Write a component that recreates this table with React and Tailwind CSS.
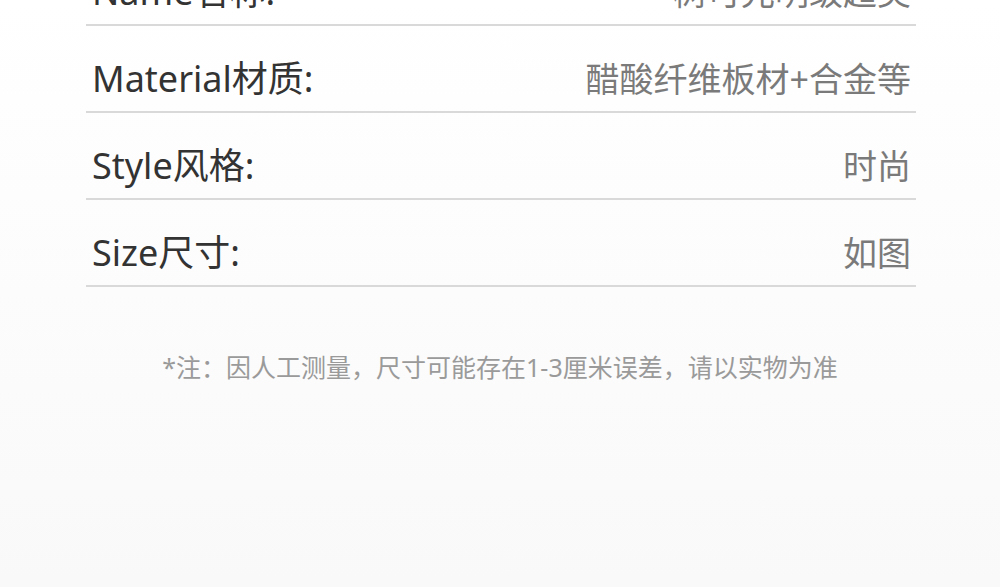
import React from 'react';

const rows = [
    { label: 'Name名称:', value: '树可光明级超美' },
    { label: 'Material材质:', value: '醋酸纤维板材+合金等' },
    { label: 'Style风格:', value: '时尚' },
    { label: 'Size尺寸:', value: '如图' },
];

export default function App() {
    return (
        <div
            className="w-[1000px] h-[587px] overflow-hidden bg-gradient-to-b from-white to-[#f9f9f9]"
            style={{ fontFamily: '"Noto Sans", "Noto Sans CJK SC", sans-serif' }}
        >
            <div className="ml-[86px] w-[830px] mt-[-61px]">
                {rows.map((row) => (
                    <div
                        key={row.label}
                        className="h-[87px] flex items-end border-b-2 border-[#d9d9d9] pl-[6px] pr-[5px] pb-[14px]"
                    >
                        <div className="w-full flex items-baseline justify-between">
                            <span className="text-[36px] leading-none text-[#333333]">{row.label}</span>
                            <span className="text-[34px] leading-none text-[#7a7a7a]">{row.value}</span>
                        </div>
                    </div>
                ))}
            </div>
            <p className="mt-[68px] text-center text-[25px] leading-none text-[#9a9a9a]">
                *注：因人工测量，尺寸可能存在1-3厘米误差，请以实物为准
            </p>
        </div>
    );
}
